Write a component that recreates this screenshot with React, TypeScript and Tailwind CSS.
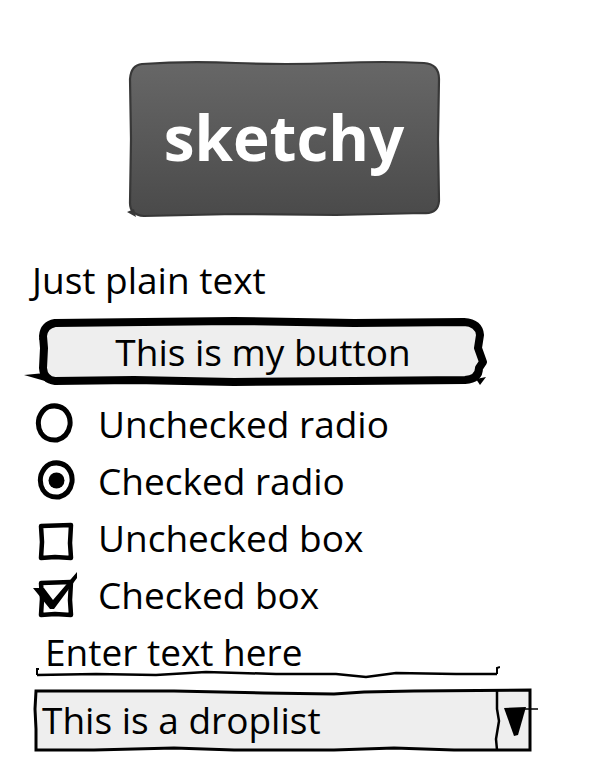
import React from "react";

function Logo() {
  return (
    <div className="relative ml-[126px] mt-[59px] flex h-[160px] w-[316px] items-center justify-center">
      <svg className="absolute inset-0" width="316" height="160" viewBox="0 0 316 160">
        <defs>
          <linearGradient id="lg" x1="0" y1="0" x2="0" y2="1">
            <stop offset="0" stopColor="#676767" />
            <stop offset="1" stopColor="#4a4a4a" />
          </linearGradient>
        </defs>
        <path
          d="M16,5 Q60,2 110,4 T210,4 T298,4 Q313,5 313,20 L312,80 L313,142 Q312,155 298,154 L210,156 L110,155 L18,157 Q4,156 4,144 L5,80 L4,20 Q5,6 16,5 Z"
          fill="url(#lg)"
          stroke="#383838"
          strokeWidth="2.2"
        />
        <path d="M1,153 L8,150 L10,158 Z" fill="#383838" />
      </svg>
      <span className="relative -mt-[4px] text-[62px] font-bold leading-none text-white">sketchy</span>
    </div>
  );
}

function Radio({ checked }: { checked?: boolean }) {
  return (
    <svg width="42" height="42" viewBox="0 0 42 42">
      <path
        d="M14,4 Q23,1 30,6 Q37,12 36,22 Q34,34 23,37 Q12,38 7,30 Q3,23 5,15 Q8,7 14,4 Z"
        fill="none"
        stroke="#000"
        strokeWidth="5"
      />
      {checked && <circle cx="20.5" cy="20.5" r="8" fill="#000" />}
    </svg>
  );
}

function Box({ checked }: { checked?: boolean }) {
  return (
    <svg width="46" height="46" viewBox="0 0 46 46" className="overflow-visible">
      <path d="M6,10 L36,9 L35,27 L36,42 L20,41 L6,42 L7,26 Z" fill="none" stroke="#000" strokeWidth="4.5" strokeLinejoin="round" />
      {checked && <path d="M-2,15 L9,15 L18,27 L42,-1 L42,5 L19,36 L15,36 Z" fill="#000" />}
    </svg>
  );
}

function Row({ children }: { children: React.ReactNode }) {
  return <div className="flex h-[57px] items-center text-[37px] leading-[57px]">{children}</div>;
}

export default function App() {
  return (
    <div className="flex h-[784px] w-[590px] flex-col overflow-hidden bg-white font-['Open_Sans',sans-serif] text-black">
      <Logo />
      <div className="ml-[32px] mt-[37px] h-[48px] text-[37px] leading-[48px]">Just plain text</div>
      <div className="relative ml-[24px] mt-[13px] flex h-[69px] w-[464px] items-center justify-center pl-[14px]">
        <svg className="absolute inset-0" width="464" height="69" viewBox="0 0 464 69">
          <path
            d="M31,6 L120,5 L210,4 L330,6 L440,5 Q455,6 456,18 L454,31 L459,45 L455,51 Q455,62 441,63 L330,64 L210,65 L110,63 L31,64 Q20,63 19,51 L20,31 L19,19 Q20,8 31,6 Z"
            fill="#eeeeee"
            stroke="#000"
            strokeWidth="8"
            strokeLinejoin="round"
          />
          <path d="M0,58 L21,56 L28,66 Z" fill="#000" />
          <path d="M15,22 L22,12 L20,28 Z" fill="#000" />
          <path d="M452,62 L462,60 L456,68 Z" fill="#000" />
        </svg>
        <span className="relative text-[37px] leading-[69px]">This is my button</span>
      </div>
      <div className="ml-[34px] mt-[9px] flex flex-col">
        <Row>
          <div className="flex w-[64px]"><Radio /></div>
          <span>Unchecked radio</span>
        </Row>
        <Row>
          <div className="flex w-[64px] pl-[2px]"><Radio checked /></div>
          <span>Checked radio</span>
        </Row>
        <Row>
          <div className="flex w-[64px] pl-[1px] pt-[2px]"><Box /></div>
          <span>Unchecked box</span>
        </Row>
        <Row>
          <div className="flex w-[64px] pl-[1px] pt-[2px]"><Box checked /></div>
          <span>Checked box</span>
        </Row>
      </div>
      <div className="relative ml-[36px] flex h-[57px] w-[464px] items-center pl-[9px] text-[37px] leading-[57px]">
        <span>Enter text here</span>
        <svg className="absolute left-0 top-[42px]" width="464" height="14" viewBox="0 0 464 14">
          <path d="M1,10 L60,9 L120,10 L170,7 L240,9 L300,9 L330,12 L360,8 L420,9 L461,9" fill="none" stroke="#000" strokeWidth="2.5" />
          <path d="M1,10 L1,4 L3,4 M461,9 L461,3 L464,2" fill="none" stroke="#000" strokeWidth="2" />
        </svg>
      </div>
      <div className="relative ml-[34px] mt-[9px] flex h-[62px] w-[498px] items-center pl-[8px] text-[37px] leading-[62px]">
        <svg className="absolute inset-0 overflow-visible" width="498" height="62" viewBox="0 0 498 62">
          <path
            d="M2,2 L60,2 L140,2 L230,4 L300,5 L330,3 L380,2 L496,1 L496,61 L420,61 L360,59 L300,61 L200,61 L140,59 L60,61 L2,61 L2,40 L1,20 Z"
            fill="#eeeeee"
            stroke="#000"
            strokeWidth="3"
          />
          <path d="M463,2 L463,20 L465,32 L462,50 L463,61" fill="none" stroke="#000" strokeWidth="2.5" />
          <path d="M470,19 L492,18 L484,46 L480,47 Z" fill="#000" />
          <path d="M488,20 L504,20" fill="none" stroke="#000" strokeWidth="1.5" />
        </svg>
        <span className="relative">This is a droplist</span>
      </div>
    </div>
  );
}
